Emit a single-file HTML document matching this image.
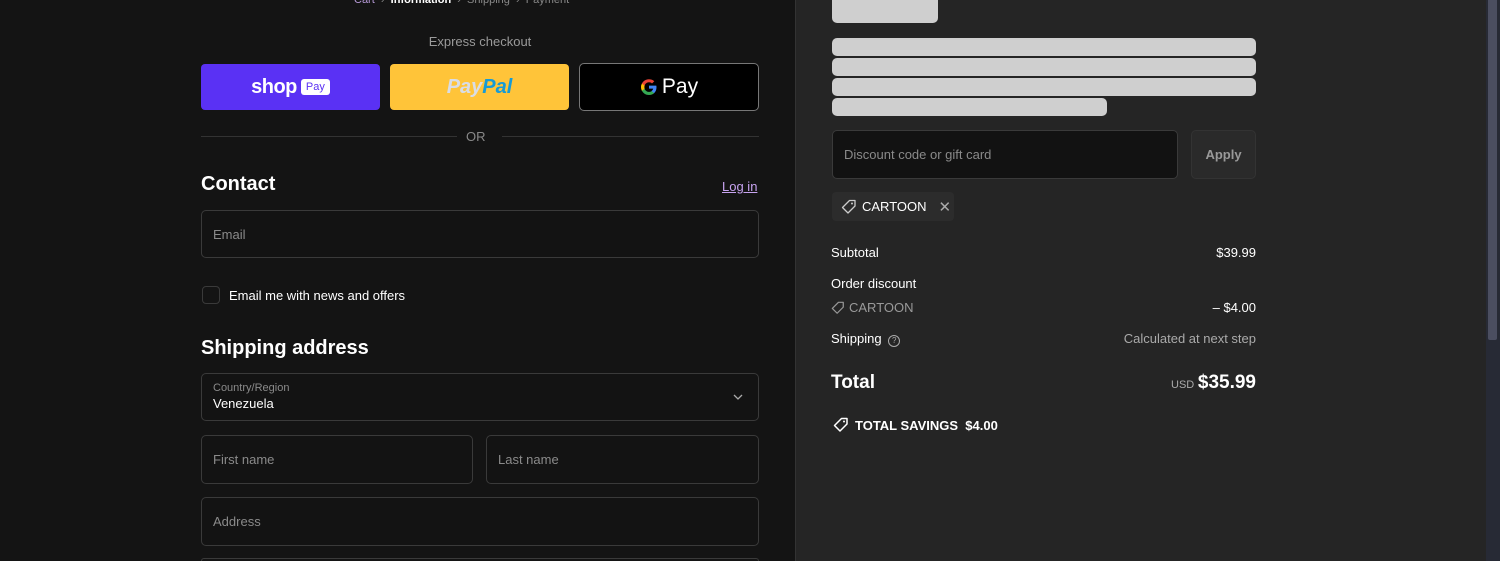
<!DOCTYPE html>
<html style="width:1500px;height:561px;overflow:hidden"><head><meta charset="utf-8"><style>
*{box-sizing:border-box;margin:0;padding:0}
body{width:1500px;height:561px;overflow:hidden;background:#141414;font-family:"Liberation Sans",sans-serif;position:relative;color:#fff}
.a{position:absolute}
.right{left:795px;top:0;width:691px;height:561px;background:#252525;border-left:1px solid #333}
.sb{left:1486px;top:0;width:14px;height:561px;background:#272a35}
.thumb{left:1488px;top:0;width:9px;height:340px;background:#4b4e60;border-radius:0 0 2px 2px}
.inp{border:1px solid #3a3a3a;border-radius:5px;background:#131313;color:#8a8a8a;font-size:13px;padding-left:11px;display:flex;align-items:center}
.sk{background:#cfcfcf;border-radius:5px}
.row{font-size:13px;color:#fff;display:flex;justify-content:space-between;width:425px;left:831px}
</style></head><body>
<div class="a" style="left:354px;top:-6px;font-size:11px;color:#888;white-space:nowrap"><span style="color:#b79ad8">Cart</span> &nbsp;›&nbsp; <b style="color:#fff">Information</b> &nbsp;›&nbsp; Shipping &nbsp;›&nbsp; Payment</div>
<div class="a" style="left:201px;top:34px;width:558px;text-align:center;font-size:13px;color:#9a9a9a">Express checkout</div>
<div class="a" style="left:201px;top:64px;width:179px;height:46px;background:#5a31f4;border-radius:4px;display:flex;align-items:center;justify-content:center;gap:4px"><span style="font-weight:bold;font-size:20px;letter-spacing:-0.5px">shop</span><span style="background:#fff;color:#5a31f4;font-size:11px;padding:2px 5px;border-radius:3px">Pay</span></div>
<div class="a" style="left:390px;top:64px;width:179px;height:46px;background:#ffc439;border-radius:4px;display:flex;align-items:center;justify-content:center;font-weight:bold;font-style:italic;font-size:20px"><span style="color:#d9dde6">Pay</span><span style="color:#169bd7">Pal</span></div>
<div class="a" style="left:579px;top:63px;width:180px;height:48px;background:#000;border:1px solid #777;border-radius:5px;display:flex;align-items:center;justify-content:center;gap:4px;font-size:21px"><svg width="18" height="18" viewBox="0 0 18 18"><path d="M16.5 9.2c0-.6-.1-1.1-.2-1.6H9v3h4.2a3.6 3.6 0 0 1-1.6 2.4v2h2.6c1.5-1.4 2.300-3.400 2.300-5.800z" fill="#4285f4"/><path d="M9 17c2.2 0 4-.7 5.2-1.9l-2.6-2c-.7.5-1.6.8-2.6.8-2 0-3.8-1.4-4.4-3.2H1.9v2.1A8 8 0 0 0 9 17z" fill="#34a853"/><path d="M4.6 10.7a4.8 4.8 0 0 1 0-3.1V5.5H1.9a8 8 0 0 0 0 7.3z" fill="#fbbc05"/><path d="M9 4.3c1.2 0 2.2.4 3 1.2l2.3-2.3A8 8 0 0 0 1.9 5.5l2.7 2.1C5.2 5.7 7 4.3 9 4.3z" fill="#ea4335"/></svg><span>Pay</span></div>
<div class="a" style="left:201px;top:136px;width:256px;height:1px;background:#333"></div>
<div class="a" style="left:502px;top:136px;width:257px;height:1px;background:#333"></div>
<div class="a" style="left:466px;top:129px;font-size:13px;color:#888">OR</div>
<div class="a" style="left:201px;top:173px;font-size:20px;font-weight:bold">Contact</div>
<div class="a" style="left:722px;top:179px;font-size:13px;color:#c7a3f0;text-decoration:underline">Log in</div>
<div class="a inp" style="left:201px;top:210px;width:558px;height:48px">Email</div>
<div class="a" style="left:202px;top:286px;width:18px;height:18px;border:1px solid #3a3a3a;border-radius:4px"></div>
<div class="a" style="left:229px;top:288px;font-size:13px">Email me with news and offers</div>
<div class="a" style="left:201px;top:337px;font-size:20px;font-weight:bold">Shipping address</div>
<div class="a inp" style="left:201px;top:373px;width:558px;height:48px;display:block;padding-top:8px"><div style="font-size:11px;color:#8a8a8a">Country/Region</div><div style="font-size:13px;color:#fff;margin-top:2px">Venezuela</div></div>
<svg class="a" style="left:733px;top:393px" width="10" height="8" viewBox="0 0 10 8"><path d="M1 2l4 4 4-4" fill="none" stroke="#aaa" stroke-width="1.3"/></svg>
<div class="a inp" style="left:201px;top:435px;width:272px;height:49px">First name</div>
<div class="a inp" style="left:486px;top:435px;width:273px;height:49px">Last name</div>
<div class="a inp" style="left:201px;top:497px;width:558px;height:49px">Address</div>
<div class="a" style="left:201px;top:558px;width:558px;height:3px;border:1px solid #3a3a3a;border-bottom:none;border-radius:5px 5px 0 0"></div>

<div class="a right"></div>
<div class="a sk" style="left:832px;top:-5px;width:106px;height:28px"></div>
<div class="a sk" style="left:832px;top:38px;width:424px;height:18px"></div>
<div class="a sk" style="left:832px;top:58px;width:424px;height:18px"></div>
<div class="a sk" style="left:832px;top:78px;width:424px;height:18px"></div>
<div class="a sk" style="left:832px;top:98px;width:275px;height:18px"></div>
<div class="a inp" style="left:832px;top:130px;width:346px;height:49px;background:#121212">Discount code or gift card</div>
<div class="a" style="left:1191px;top:130px;width:65px;height:49px;border:1px solid #333;border-radius:5px;background:#2a2a2a;color:#999;font-size:13px;font-weight:bold;display:flex;align-items:center;justify-content:center">Apply</div>
<div class="a" style="left:832px;top:192px;width:122px;height:29px;background:#2c2c2c;border-radius:4px;display:flex;align-items:center;padding-left:9px;gap:5px;font-size:13px"><svg width="16" height="16" viewBox="0 0 16 16"><path d="M8.5 1.5h5.5v5.5l-7 7-5.5-5.5z" fill="none" stroke="#ccc" stroke-width="1.3" stroke-linejoin="round"/><circle cx="11" cy="4.5" r="1" fill="#ccc"/></svg>CARTOON<span style="color:#aaa;margin-left:7px;font-size:15px">✕</span></div>
<div class="a row" style="top:245px"><span>Subtotal</span><span>$39.99</span></div>
<div class="a row" style="top:276px"><span>Order discount</span></div>
<div class="a row" style="top:300px"><span style="color:#999;display:flex;align-items:center;gap:4px"><svg width="14" height="14" viewBox="0 0 16 16"><path d="M8.5 1.5h5.5v5.5l-7 7-5.5-5.5z" fill="none" stroke="#999" stroke-width="1.4" stroke-linejoin="round"/></svg>CARTOON</span><span>– $4.00</span></div>
<div class="a row" style="top:331px"><span>Shipping <span style="display:inline-block;width:12px;height:12px;border:1px solid #aaa;border-radius:50%;font-size:8px;text-align:center;line-height:10px;color:#aaa;margin-left:3px">?</span></span><span style="color:#aaa">Calculated at next step</span></div>
<div class="a row" style="top:372px;align-items:baseline"><span style="font-size:19px;font-weight:bold">Total</span><span><span style="font-size:11px;color:#aaa">USD</span> <b style="font-size:19px">$35.99</b></span></div>
<div class="a" style="left:833px;top:417px;display:flex;align-items:center;gap:6px;font-size:13px;font-weight:bold"><svg width="16" height="16" viewBox="0 0 16 16"><path d="M8.5 1.5h5.5v5.5l-7 7-5.5-5.5z" fill="none" stroke="#fff" stroke-width="1.5" stroke-linejoin="round"/><circle cx="11" cy="4.5" r="1" fill="#fff"/></svg>TOTAL SAVINGS &nbsp;$4.00</div>
<div class="a sb"></div><div class="a thumb"></div>
</body></html>
